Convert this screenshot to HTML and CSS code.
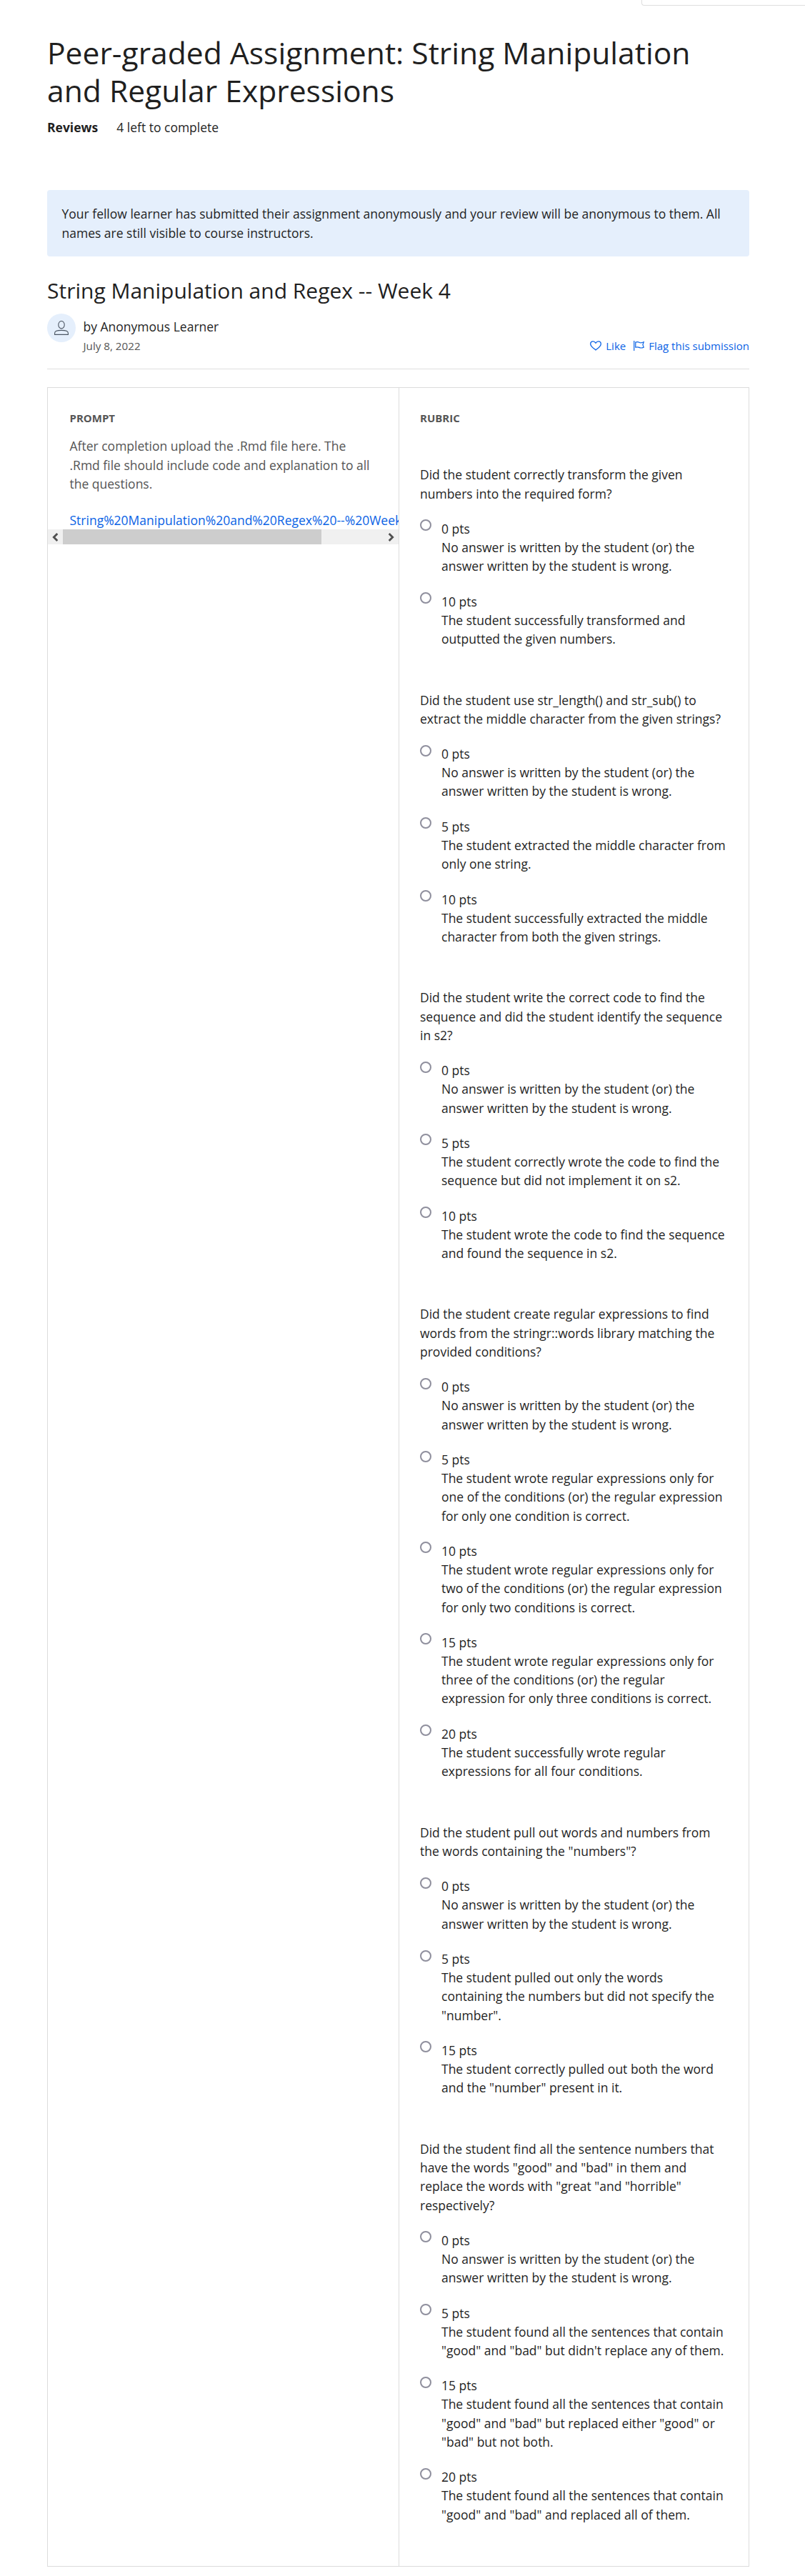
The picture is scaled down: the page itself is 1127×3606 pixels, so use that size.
FILE: index.html
```html
<!DOCTYPE html>
<html lang="en">
<head>
<meta charset="utf-8">
<title>Peer-graded Assignment</title>
<link rel="stylesheet" href="styles.css">
</head>
<body>
<div class="corner-panel"></div>
<main class="page">
  <h1 class="title">Peer-graded Assignment: String Manipulation<br>and Regular Expressions</h1>
  <p class="reviews"><strong>Reviews</strong><span>4 left to complete</span></p>
  <div class="notice">Your fellow learner has submitted their assignment anonymously and your review will be anonymous to them. All<br>names are still visible to course instructors.</div>
  <h2 class="subtitle">String Manipulation and Regex -- Week 4</h2>
  <div class="meta">
    <div class="avatar"><svg width="20" height="20" viewBox="0 0 20 20" fill="none" stroke="#4c5663" stroke-width="1.1"><ellipse cx="10" cy="5.7" rx="4.2" ry="5.2"/><path d="M.6 19.4v-2.2c0-2.6 3.4-3.8 9.4-3.8s9.4 1.2 9.4 3.8v2.2z"/></svg></div>
    <div class="author"><div class="name">by Anonymous Learner</div><div class="date">July 8, 2022</div></div>
    <div class="actions">
      <a class="action"><svg width="16" height="14" viewBox="0 0 16 14" fill="none" stroke="currentColor" stroke-width="1.3"><path d="M8 13C5.5 10.800.7 8 .7 4.400.7 2.200 2.200.8 4.200.8 6 .8 7.200 1.900 8 3.200 8.800 1.900 10 .8 11.800.8c2 0 3.500 1.400 3.500 3.600C15.300 8 10.500 10.800 8 13z"/></svg>Like</a>
      <a class="action"><svg width="15" height="14" viewBox="0 0 15 14" fill="none" stroke="currentColor" stroke-width="1.2"><path d="M.7 0v14M2.800 1.500v8.200M2.800 2.200c2-1 3.500-.8 5.100.1s3.400.9 6.300-.5l-1.300 3.800 1.300 3.500c-2.900 1.300-4.700 1.100-6.300.3s-3.100-.9-5.100-.1"/></svg>Flag this submission</a>
    </div>
  </div>
  <div class="panel">
    <section class="prompt">
      <h3 class="label">PROMPT</h3>
      <p class="prompt-text">After completion upload the .Rmd file here. The<br>.Rmd file should include code and explanation to all<br>the questions.</p>
      <a class="file">String%20Manipulation%20and%20Regex%20--%20Week%204</a>
      <div class="scrollbar">
        <svg class="arrow" width="9" height="12" viewBox="0 0 9 12" fill="none" stroke="#505050" stroke-width="2.800"><path d="M7.300 1 2.300 6l5 5"/></svg>
        <div class="thumb"></div>
        <svg class="arrow arrow-right" width="9" height="12" viewBox="0 0 9 12" fill="none" stroke="#505050" stroke-width="2.800"><path d="m1.700 1 5 5-5 5"/></svg>
      </div>
    </section>
    <section class="rubric">
      <h3 class="label">RUBRIC</h3>
      <div class="question">
        <p>Did the student correctly transform the given<br>numbers into the required form?</p>
        <label class="option"><input type="radio" name="q1"><span><b>0 pts</b>No answer is written by the student (or) the<br>answer written by the student is wrong.</span></label>
        <label class="option"><input type="radio" name="q1"><span><b>10 pts</b>The student successfully transformed and<br>outputted the given numbers.</span></label>
      </div>
      <div class="question">
        <p>Did the student use str_length() and str_sub() to<br>extract the middle character from the given strings?</p>
        <label class="option"><input type="radio" name="q2"><span><b>0 pts</b>No answer is written by the student (or) the<br>answer written by the student is wrong.</span></label>
        <label class="option"><input type="radio" name="q2"><span><b>5 pts</b>The student extracted the middle character from<br>only one string.</span></label>
        <label class="option"><input type="radio" name="q2"><span><b>10 pts</b>The student successfully extracted the middle<br>character from both the given strings.</span></label>
      </div>
      <div class="question">
        <p>Did the student write the correct code to find the<br>sequence and did the student identify the sequence<br>in s2?</p>
        <label class="option"><input type="radio" name="q3"><span><b>0 pts</b>No answer is written by the student (or) the<br>answer written by the student is wrong.</span></label>
        <label class="option"><input type="radio" name="q3"><span><b>5 pts</b>The student correctly wrote the code to find the<br>sequence but did not implement it on s2.</span></label>
        <label class="option"><input type="radio" name="q3"><span><b>10 pts</b>The student wrote the code to find the sequence<br>and found the sequence in s2.</span></label>
      </div>
      <div class="question">
        <p>Did the student create regular expressions to find<br>words from the stringr::words library matching the<br>provided conditions?</p>
        <label class="option"><input type="radio" name="q4"><span><b>0 pts</b>No answer is written by the student (or) the<br>answer written by the student is wrong.</span></label>
        <label class="option"><input type="radio" name="q4"><span><b>5 pts</b>The student wrote regular expressions only for<br>one of the conditions (or) the regular expression<br>for only one condition is correct.</span></label>
        <label class="option"><input type="radio" name="q4"><span><b>10 pts</b>The student wrote regular expressions only for<br>two of the conditions (or) the regular expression<br>for only two conditions is correct.</span></label>
        <label class="option"><input type="radio" name="q4"><span><b>15 pts</b>The student wrote regular expressions only for<br>three of the conditions (or) the regular<br>expression for only three conditions is correct.</span></label>
        <label class="option"><input type="radio" name="q4"><span><b>20 pts</b>The student successfully wrote regular<br>expressions for all four conditions.</span></label>
      </div>
      <div class="question">
        <p>Did the student pull out words and numbers from<br>the words containing the "numbers"?</p>
        <label class="option"><input type="radio" name="q5"><span><b>0 pts</b>No answer is written by the student (or) the<br>answer written by the student is wrong.</span></label>
        <label class="option"><input type="radio" name="q5"><span><b>5 pts</b>The student pulled out only the words<br>containing the numbers but did not specify the<br>"number".</span></label>
        <label class="option"><input type="radio" name="q5"><span><b>15 pts</b>The student correctly pulled out both the word<br>and the "number" present in it.</span></label>
      </div>
      <div class="question">
        <p>Did the student find all the sentence numbers that<br>have the words "good" and "bad" in them and<br>replace the words with "great "and "horrible"<br>respectively?</p>
        <label class="option"><input type="radio" name="q6"><span><b>0 pts</b>No answer is written by the student (or) the<br>answer written by the student is wrong.</span></label>
        <label class="option"><input type="radio" name="q6"><span><b>5 pts</b>The student found all the sentences that contain<br>"good" and "bad" but didn't replace any of them.</span></label>
        <label class="option"><input type="radio" name="q6"><span><b>15 pts</b>The student found all the sentences that contain<br>"good" and "bad" but replaced either "good" or<br>"bad" but not both.</span></label>
        <label class="option"><input type="radio" name="q6"><span><b>20 pts</b>The student found all the sentences that contain<br>"good" and "bad" and replaced all of them.</span></label>
      </div>
    </section>
  </div>
</main>
</body>
</html>
```
FILE: styles.css
```css
* { box-sizing: border-box; }
body {
  margin: 0;
  background: #fff;
  color: #1f1f1f;
  font: 17.5px/26.25px "Open Sans", "Noto Sans", sans-serif;
  white-space: nowrap;
  overflow-x: hidden;
}
h1, h2, h3, p { margin: 0; font-weight: 400; }

.corner-panel {
  height: 8px;
  margin-left: 898px;
  border: solid #dedede;
  border-width: 0 0 1px 1px;
  border-bottom-left-radius: 4px;
}
.page { width: 983px; margin-left: 66px; padding-top: 38.5px; }
.title { font-size: 42.6px; line-height: 53.3px; }
.reviews { display: flex; gap: 26px; margin-top: 12px; }
.notice {
  height: 93px;
  margin-top: 75px;
  padding: 20px 20.5px;
  border-radius: 4px;
  background: #e5effc;
  line-height: 26.7px;
}
.subtitle { margin-top: 29px; font-size: 30px; line-height: 38px; }
.meta {
  display: flex;
  height: 79px;
  margin-top: 12px;
  border-bottom: 1px solid #dfdfdf;
}
.avatar {
  display: flex;
  align-items: center;
  justify-content: center;
  width: 40px;
  height: 40px;
  margin-top: 1px;
  border-radius: 50%;
  background: #e5effc;
}
.author { margin: 6px 0 0 10.5px; }
.date { color: #555; font-size: 15.2px; }
.actions { display: flex; gap: 11px; margin: 33px 0 0 auto; color: #0b63e5; font-size: 15px; }
.action { display: flex; gap: 6px; }
.action svg { margin-top: 6px; }

.panel {
  display: grid;
  grid-template-columns: 492px 489px;
  height: 3051px;
  margin-top: 25px;
  border: 1px solid #dcdcdc;
}
.prompt { padding-top: 29px; border-right: 1px solid #dcdcdc; overflow: hidden; }
.label { color: #555; font-size: 15px; font-weight: 700; line-height: 26px; }
.prompt .label, .prompt-text, .file { margin-left: 30.5px; }
.prompt-text { margin-top: 13px; color: #555; }
.file { display: block; margin-top: 25px; color: #0b63e5; }
.scrollbar { display: flex; align-items: center; height: 21px; background: #f0f0f0; }
.arrow { margin: 0 6px; }
.thumb { width: 362px; height: 21px; background: #cdcdcd; }
.arrow-right { margin-left: auto; }

.rubric { padding: 29px 0 0 29px; }
.question { margin-top: 59.3px; }
.label + .question { margin-top: 53px; }
.option { display: flex; gap: 14px; margin-top: 23.6px; }
.option b { display: block; padding-top: .6px; font-weight: 400; line-height: 25px; }
.option input {
  appearance: none;
  flex: none;
  width: 16px;
  height: 16px;
  margin: 0;
  border: 2px solid #8f8f9d;
  border-radius: 50%;
  background: #fff;
}
```
